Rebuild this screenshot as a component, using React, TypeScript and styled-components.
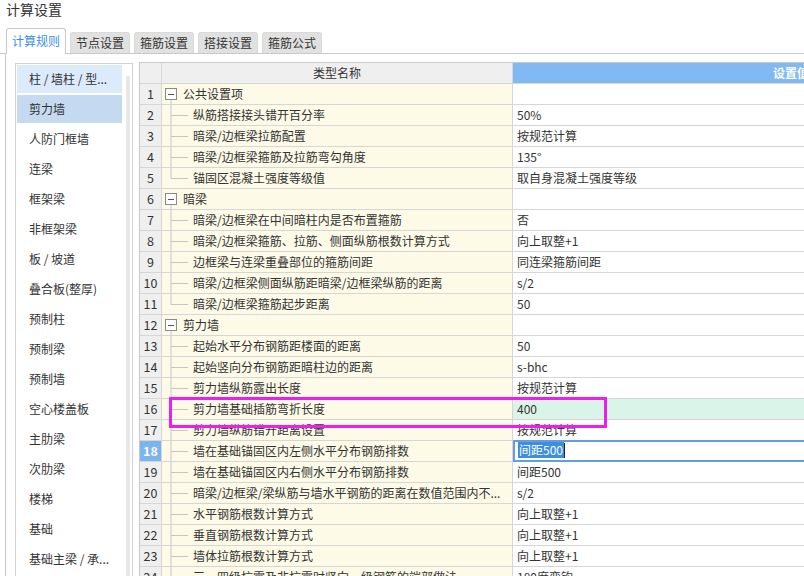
import React from "react";
import styled, { createGlobalStyle } from "styled-components";

const GlobalStyle = createGlobalStyle`
  html, body {
    margin: 0;
    padding: 0;
    background: #fff;
  }
  body {
    font-family: "Noto Sans CJK SC", "Microsoft YaHei", sans-serif;
    color: #333;
    overflow: hidden;
  }
`;

const Page = styled.div`
  position: relative;
  width: 804px;
  height: 576px;
  overflow: hidden;
  background: #fff;
`;

const Title = styled.div`
  height: 28px;
  padding-left: 6px;
  font-size: 14px;
  line-height: 18px;
  color: #333;
`;

const TabBar = styled.div`
  display: flex;
  align-items: flex-end;
  gap: 4px;
  height: 25px;
  padding-left: 6px;
  border-bottom: 1px solid #c9c9c9;
`;

const Tab = styled.div<{ $active?: boolean }>`
  box-sizing: border-box;
  height: ${({ $active }) => ($active ? 26 : 21)}px;
  margin-bottom: ${({ $active }) => ($active ? -1 : 0)}px;
  padding: 0 5px;
  font-size: 12px;
  line-height: ${({ $active }) => ($active ? 24 : 20)}px;
  border: 1px solid ${({ $active }) => ($active ? "#c9c9c9" : "#dadada")};
  border-bottom: none;
  border-radius: 3px 3px 0 0;
  background: ${({ $active }) => ($active ? "#fff" : "#e1e1e1")};
  color: ${({ $active }) => ($active ? "#3a8ee6" : "#333")};
`;

const Body = styled.div`
  display: flex;
  align-items: flex-start;
  height: 522px;
  margin-left: 5px;
  border-left: 1px solid #c9c9c9;
`;

const SideList = styled.div`
  display: flex;
  flex-shrink: 0;
  width: 118px;
  height: 520px;
  margin: 9px 0 0 9px;
  padding: 1px 0 0 1px;
  box-sizing: border-box;
  border: 1px solid #d2d2d2;
  border-bottom: none;
`;

const SideItems = styled.div`
  display: flex;
  flex-direction: column;
  gap: 2px;
  width: 105px;
`;

const SideItem = styled.div<{ $tone?: "hover" | "selected" }>`
  height: 28px;
  padding-left: 12px;
  font-size: 12px;
  line-height: 28px;
  white-space: nowrap;
  color: #333;
  background: ${({ $tone }) =>
    $tone === "hover" ? "#dcebfc" : $tone === "selected" ? "#c5daf1" : "transparent"};
`;

const ScrollTrack = styled.div`
  width: 4px;
  height: 520px;
  margin: 11px 0 0 4px;
  background: #e8e8e8;
`;

const Grid = styled.div`
  flex: 1;
  min-width: 0;
  height: 514px;
  margin: 8px 0 0 6px;
  border-top: 1px solid #c9c9c9;
  border-left: 1px solid #c9c9c9;
  overflow: hidden;
`;

const Row = styled.div`
  display: flex;
  height: 20px;
  border-bottom: 1px solid #d6d6d6;
`;

const NumCell = styled.div<{ $active?: boolean; $header?: boolean }>`
  flex-shrink: 0;
  width: 21px;
  border-right: 1px solid #d6d6d6;
  text-align: center;
  font-size: 12.5px;
  line-height: 20px;
  font-weight: ${({ $active }) => ($active ? 700 : 400)};
  color: ${({ $active }) => ($active ? "#fff" : "#333")};
  background: ${({ $active }) => ($active ? "#7cb4f1" : "#efefef")};
`;

const NameCell = styled.div<{ $header?: boolean }>`
  flex-shrink: 0;
  display: flex;
  align-items: center;
  justify-content: ${({ $header }) => ($header ? "center" : "flex-start")};
  width: 350px;
  border-right: 1px solid #d6d6d6;
  font-size: 12px;
  line-height: 20px;
  white-space: nowrap;
  overflow: hidden;
  background: ${({ $header }) => ($header ? "#efefef" : "#fdfae8")};
`;

const ValueCell = styled.div<{ $tone?: "header" | "green" | "edit" }>`
  flex-shrink: 0;
  box-sizing: border-box;
  width: 552px;
  padding-left: ${({ $tone }) => ($tone === "edit" ? 3 : 4)}px;
  font-size: 12px;
  line-height: ${({ $tone }) => ($tone === "edit" ? 16 : 20)}px;
  white-space: nowrap;
  text-align: ${({ $tone }) => ($tone === "header" ? "center" : "left")};
  color: ${({ $tone }) => ($tone === "header" ? "#fff" : "#333")};
  font-weight: ${({ $tone }) => ($tone === "header" ? 700 : 400)};
  background: ${({ $tone }) =>
    $tone === "header" ? "#80b9f4" : $tone === "green" ? "#dbf4e9" : "#fff"};
  border: ${({ $tone }) => ($tone === "edit" ? "2px solid #5f9fe2" : "none")};
  margin-top: ${({ $tone }) => ($tone === "edit" ? -1 : 0)}px;
  height: ${({ $tone }) => ($tone === "edit" ? 22 : 20)}px;
`;

const Selected = styled.span`
  display: inline-block;
  padding: 0 1px;
  background: #3d8de0;
  color: #fff;
  line-height: 16px;
`;

const Caret = styled.span`
  display: inline-block;
  width: 1px;
  height: 15px;
  vertical-align: -3px;
  background: #222;
`;

const GroupText = styled.span`
  margin-left: 6px;
`;

const Highlight = styled.div`
  position: absolute;
  left: 169px;
  top: 397px;
  width: 438px;
  height: 31px;
  box-sizing: border-box;
  border: 3px solid #ee1fee;
  pointer-events: none;
`;

const LINE = "#c6c6c6";

const GroupGlyph = () => (
  <svg width="15" height="20" viewBox="0 0 15 20" style={{ flexShrink: 0 }}>
    <rect x="3.5" y="4.5" width="11" height="11" fill="#fff" stroke="#8a8a8a" />
    <line x1="6" y1="10.5" x2="12" y2="10.5" stroke="#555" />
    <line x1="9" y1="16" x2="9" y2="20" stroke={LINE} />
  </svg>
);

const ChildGlyph = ({ last }: { last?: boolean }) => (
  <svg width="31" height="20" viewBox="0 0 31 20" style={{ flexShrink: 0 }}>
    <line x1="9" y1="0" x2="9" y2={last ? 10.5 : 20} stroke={LINE} />
    <line x1="9" y1="10.5" x2="26" y2="10.5" stroke={LINE} />
  </svg>
);

type Item = {
  name: string;
  value?: string;
  group?: boolean;
  last?: boolean;
  tone?: "green" | "edit";
};

const rows: Item[] = [
  { name: "公共设置项", group: true },
  { name: "纵筋搭接接头错开百分率", value: "50%" },
  { name: "暗梁/边框梁拉筋配置", value: "按规范计算" },
  { name: "暗梁/边框梁箍筋及拉筋弯勾角度", value: "135°" },
  { name: "锚固区混凝土强度等级值", value: "取自身混凝土强度等级", last: true },
  { name: "暗梁", group: true },
  { name: "暗梁/边框梁在中间暗柱内是否布置箍筋", value: "否" },
  { name: "暗梁/边框梁箍筋、拉筋、侧面纵筋根数计算方式", value: "向上取整+1" },
  { name: "边框梁与连梁重叠部位的箍筋间距", value: "同连梁箍筋间距" },
  { name: "暗梁/边框梁侧面纵筋距暗梁/边框梁纵筋的距离", value: "s/2" },
  { name: "暗梁/边框梁箍筋起步距离", value: "50", last: true },
  { name: "剪力墙", group: true },
  { name: "起始水平分布钢筋距楼面的距离", value: "50" },
  { name: "起始竖向分布钢筋距暗柱边的距离", value: "s-bhc" },
  { name: "剪力墙纵筋露出长度", value: "按规范计算" },
  { name: "剪力墙基础插筋弯折长度", value: "400", tone: "green" },
  { name: "剪力墙纵筋错开距离设置", value: "按规范计算" },
  { name: "墙在基础锚固区内左侧水平分布钢筋排数", value: "间距500", tone: "edit" },
  { name: "墙在基础锚固区内右侧水平分布钢筋排数", value: "间距500" },
  { name: "暗梁/边框梁/梁纵筋与墙水平钢筋的距离在数值范围内不...", value: "s/2" },
  { name: "水平钢筋根数计算方式", value: "向上取整+1" },
  { name: "垂直钢筋根数计算方式", value: "向上取整+1" },
  { name: "墙体拉筋根数计算方式", value: "向上取整+1" },
  { name: "三、四级抗震及非抗震时竖向一级钢筋的端部做法", value: "180度弯钩" },
];

const sideItems = [
  "柱 / 墙柱 / 型...",
  "剪力墙",
  "人防门框墙",
  "连梁",
  "框架梁",
  "非框架梁",
  "板 / 坡道",
  "叠合板(整厚)",
  "预制柱",
  "预制梁",
  "预制墙",
  "空心楼盖板",
  "主肋梁",
  "次肋梁",
  "楼梯",
  "基础",
  "基础主梁 / 承...",
];

const tabs = ["计算规则", "节点设置", "箍筋设置", "搭接设置", "箍筋公式"];

const App: React.FC = () => {
  return (
    <Page>
      <GlobalStyle />
      <Title>计算设置</Title>
      <TabBar>
        {tabs.map((t, i) => (
          <Tab key={t} $active={i === 0}>
            {t}
          </Tab>
        ))}
      </TabBar>
      <Body>
        <SideList>
          <SideItems>
            {sideItems.map((s, i) => (
              <SideItem key={s} $tone={i === 0 ? "hover" : i === 1 ? "selected" : undefined}>
                {s}
              </SideItem>
            ))}
          </SideItems>
          <ScrollTrack />
        </SideList>
        <Grid>
          <Row>
            <NumCell $header />
            <NameCell $header>类型名称</NameCell>
            <ValueCell $tone="header">设置值</ValueCell>
          </Row>
          {rows.map((r, i) => (
            <Row key={i}>
              <NumCell $active={r.tone === "edit"}>{i + 1}</NumCell>
              <NameCell style={r.group ? { paddingLeft: 0 } : undefined}>
                {r.group ? (
                  <>
                    <GroupGlyph />
                    <GroupText>{r.name}</GroupText>
                  </>
                ) : (
                  <>
                    <ChildGlyph last={r.last} />
                    {r.name}
                  </>
                )}
              </NameCell>
              <ValueCell $tone={r.tone}>
                {r.tone === "edit" ? (
                  <>
                    <Selected>{r.value}</Selected>
                    <Caret />
                  </>
                ) : (
                  r.value
                )}
              </ValueCell>
            </Row>
          ))}
        </Grid>
      </Body>
      <Highlight />
    </Page>
  );
};

export default App;
